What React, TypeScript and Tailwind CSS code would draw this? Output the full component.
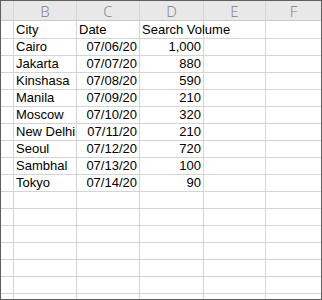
const columns = ['B', 'C', 'D', 'E', 'F'];

const rows: [string, string, string][] = [
  ['Cairo', '07/06/20', '1,000'],
  ['Jakarta', '07/07/20', '880'],
  ['Kinshasa', '07/08/20', '590'],
  ['Manila', '07/09/20', '210'],
  ['Moscow', '07/10/20', '320'],
  ['New Delhi', '07/11/20', '210'],
  ['Seoul', '07/12/20', '720'],
  ['Sambhal', '07/13/20', '100'],
  ['Tokyo', '07/14/20', '90'],
];

const gridCols = 'grid grid-cols-[13px_63px_63px_64px_62px_1fr]';

export default function App() {
  const blanks = Array.from({ length: 8 });

  return (
    <div className="w-[322px] h-[300px] overflow-hidden bg-white border border-[#5f5f5f] font-['Liberation_Sans',Arial,sans-serif] text-[13px] text-black">
      {/* Column headers */}
      <div className={`${gridCols} h-[20px] bg-[#e8e8e8] border-b border-[#c8c8c8]`}>
        <div className="border-r border-[#d6d6d6]" />
        {columns.map((c, i) => (
          <div
            key={c}
            className={`flex items-end justify-center font-['Open_Sans',sans-serif] font-light text-[15px] leading-[18px] text-[#7a7a7a] ${
              i < columns.length - 1 ? 'border-r border-[#d6d6d6]' : ''
            }`}
          >
            {c}
          </div>
        ))}
      </div>

      {/* Title row */}
      <div className={`${gridCols} h-[18px] border-b border-[#d4d4d4] leading-[17px]`}>
        <div className="border-r border-[#d4d4d4]" />
        <div className="pl-[2px] border-r border-[#d4d4d4]">City</div>
        <div className="pl-[2px] border-r border-[#d4d4d4]">Date</div>
        <div className="pl-[2px] border-r border-[#d4d4d4] whitespace-nowrap">Search Volume</div>
        <div className="border-r border-[#d4d4d4]" />
        <div />
      </div>

      {/* Data rows */}
      {rows.map(([city, date, vol]) => (
        <div key={city} className={`${gridCols} h-[17px] border-b border-[#d4d4d4] leading-[16px]`}>
          <div className="border-r border-[#d4d4d4]" />
          <div className="pl-[2px] border-r border-[#d4d4d4] whitespace-nowrap">{city}</div>
          <div className="pr-[2px] text-right border-r border-[#d4d4d4]">{date}</div>
          <div className="pr-[2px] text-right border-r border-[#d4d4d4]">{vol}</div>
          <div className="border-r border-[#d4d4d4]" />
          <div />
        </div>
      ))}

      {/* Empty rows */}
      {blanks.map((_, i) => (
        <div key={i} className={`${gridCols} h-[17px] border-b border-[#d4d4d4]`}>
          <div className="border-r border-[#d4d4d4]" />
          <div className="border-r border-[#d4d4d4]" />
          <div className="border-r border-[#d4d4d4]" />
          <div className="border-r border-[#d4d4d4]" />
          <div className="border-r border-[#d4d4d4]" />
          <div />
        </div>
      ))}
    </div>
  );
}
